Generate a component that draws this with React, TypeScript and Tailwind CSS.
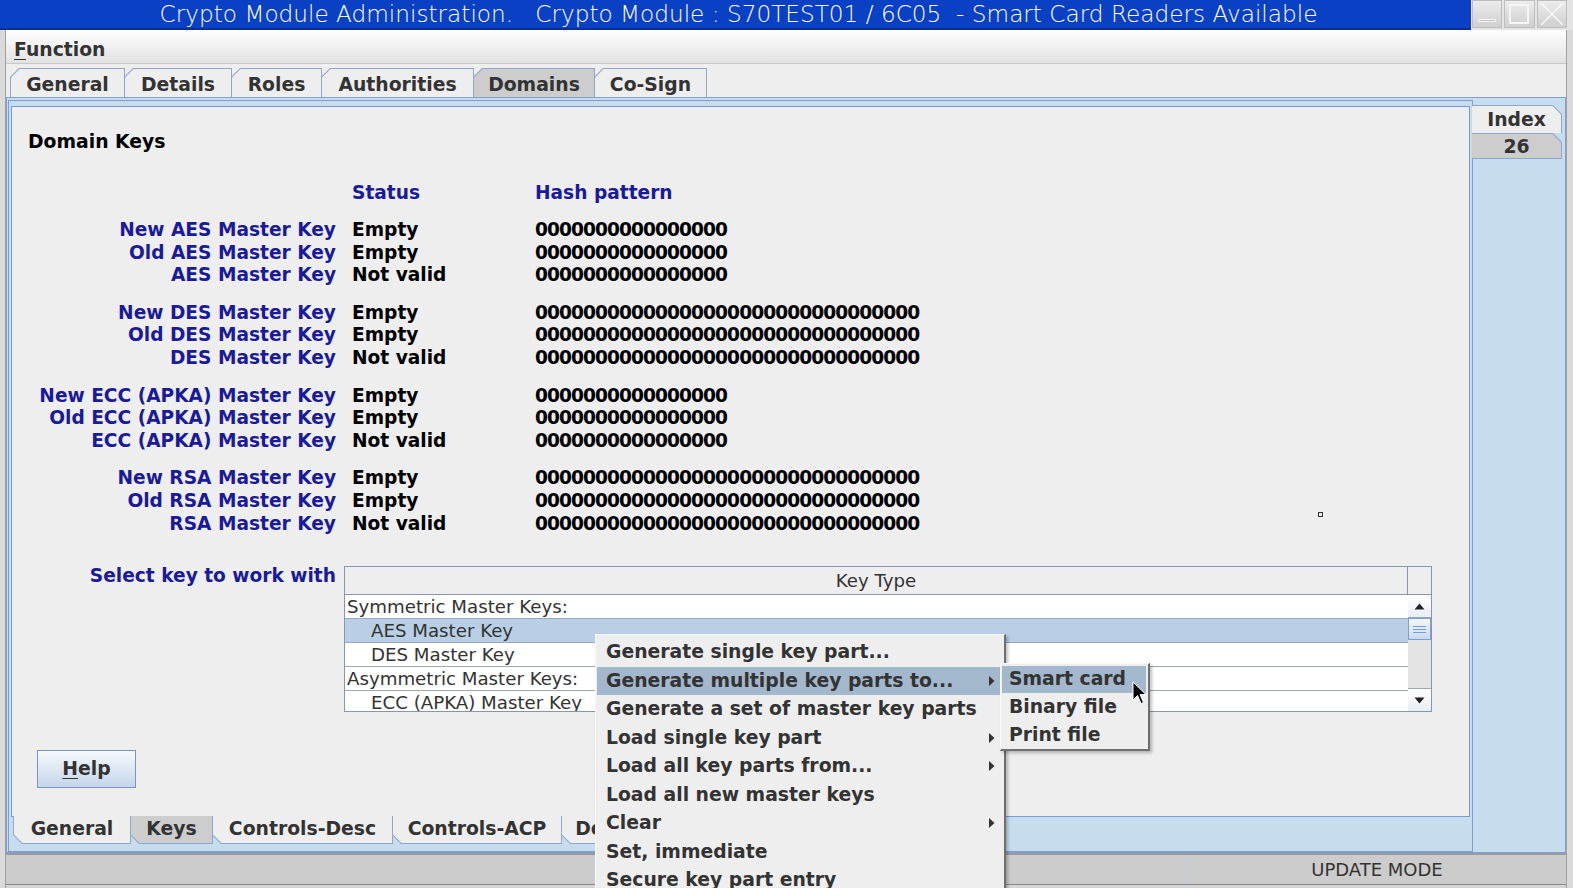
import React from 'react'

const zeros16 = '0'.repeat(16)
const zeros32 = '0'.repeat(32)

const groups = [
  [
    ['New AES Master Key', 'Empty', zeros16],
    ['Old AES Master Key', 'Empty', zeros16],
    ['AES Master Key', 'Not valid', zeros16],
  ],
  [
    ['New DES Master Key', 'Empty', zeros32],
    ['Old DES Master Key', 'Empty', zeros32],
    ['DES Master Key', 'Not valid', zeros32],
  ],
  [
    ['New ECC (APKA) Master Key', 'Empty', zeros16],
    ['Old ECC (APKA) Master Key', 'Empty', zeros16],
    ['ECC (APKA) Master Key', 'Not valid', zeros16],
  ],
  [
    ['New RSA Master Key', 'Empty', zeros32],
    ['Old RSA Master Key', 'Empty', zeros32],
    ['RSA Master Key', 'Not valid', zeros32],
  ],
]

const topTabs = [
  { label: 'General', w: 'w-[115px]' },
  { label: 'Details', w: 'w-[108px]' },
  { label: 'Roles', w: 'w-[91px]' },
  { label: 'Authorities', w: 'w-[153px]' },
  { label: 'Domains', w: 'w-[122px]', selected: true },
  { label: 'Co-Sign', w: 'w-[113px]' },
]

const bottomTabs = [
  { label: 'General', w: 'w-[118px]' },
  { label: 'Keys', w: 'w-[83px]', selected: true },
  { label: 'Controls-Desc', w: 'w-[181px]' },
  { label: 'Controls-ACP', w: 'w-[170px]' },
  { label: 'Domains', w: 'w-[120px]' },
]

const menuItems = [
  { label: 'Generate single key part...' },
  { label: 'Generate multiple key parts to...', sub: true, active: true },
  { label: 'Generate a set of master key parts' },
  { label: 'Load single key part', sub: true },
  { label: 'Load all key parts from...', sub: true },
  { label: 'Load all new master keys' },
  { label: 'Clear', sub: true },
  { label: 'Set, immediate' },
  { label: 'Secure key part entry' },
]

function Arrow() {
  return (
    <svg width="7" height="12" viewBox="0 0 7 12">
      <path d="M1 1 L6.5 6 L1 11 Z" fill="#333" />
    </svg>
  )
}

export default function App() {
  return (
    <div className="w-[1573px] h-[888px] overflow-hidden bg-[#eeeeee] relative flex flex-col font-['DejaVu_Sans',sans-serif] text-[#333]">
      {/* title bar */}
      <div className="h-[30px] flex shrink-0">
        <div className="flex-1 bg-[#0a40c4] border-b-2 border-[#0a2f8c] flex items-center justify-center pl-[6px] text-white text-[23.2px] font-extralight whitespace-pre">
          Crypto Module Administration.   Crypto Module : S70TEST01 / 6C05  - Smart Card Readers Available
        </div>
        <div className="w-[102px] bg-[#e4e4e4] flex gap-[2px] pl-[1px] pr-[6px] pb-[2px]">
          <div className="flex-1 bg-gradient-to-b from-[#ececec] to-[#cfcfcf] border border-[#bdbdbd] flex items-end justify-center pb-[5px]">
            <div className="w-[18px] h-[3px] border border-[#f6f6f6] bg-[#c4c4c4]" />
          </div>
          <div className="flex-1 bg-gradient-to-b from-[#ececec] to-[#cfcfcf] border border-[#bdbdbd] flex items-center justify-center">
            <div className="w-[20px] h-[20px] border-2 border-[#f6f6f6]" />
          </div>
          <div className="flex-1 bg-gradient-to-b from-[#ececec] to-[#cfcfcf] border border-[#bdbdbd] flex items-center justify-center">
            <svg width="26" height="26" viewBox="0 0 26 26">
              <path d="M2 2 L24 24 M24 2 L2 24" stroke="#f8f8f8" strokeWidth="1.5" />
            </svg>
          </div>
        </div>
      </div>

      <div className="flex-1 flex min-h-0">
        {/* left window frame */}
        <div className="w-[6px] bg-[#dadada] border-r border-[#a0a0a0]" />

        <div className="flex-1 flex flex-col min-w-0">
          {/* menu bar */}
          <div className="h-[34px] shrink-0 bg-gradient-to-b from-white to-[#e2e2e2] border-b border-[#c8c8c8] flex items-center pl-[8px] pt-[7px] text-[18.8px] font-bold">
            <span>
              <span className="underline underline-offset-[3px]">F</span>unction
            </span>
          </div>

          {/* top tabs */}
          <div className="h-[33px] shrink-0 flex items-end pl-[4px]">
            {topTabs.map((t) => (
              <div
                key={t.label}
                className={`${t.w} h-[29px] -mr-[1px] p-[1px] pb-0 bg-[#8fa7cb] [clip-path:polygon(9px_0,100%_0,100%_100%,0_100%,0_9px)]`}
              >
                <div
                  className={`h-full flex items-center justify-center pt-[4px] text-[18.8px] font-bold [clip-path:polygon(8.5px_0,100%_0,100%_100%,0_100%,0_8.5px)] ${t.selected ? 'bg-[#cdcdcd]' : 'bg-[#eeeeee]'}`}
                >
                  {t.label}
                </div>
              </div>
            ))}
          </div>

          {/* outer tab content */}
          <div className="h-[756px] shrink-0 border border-[#7f9fd2] bg-[#c8dcf0] pt-[2px] pl-[1px] flex">
            {/* pane with right tabs */}
            <div className="w-[1465px] h-[752px] border border-[#7f9fd2] bg-[#c8dcf0] pt-[5px] pl-[2px] pr-[2px] flex flex-col">
              {/* inner content box */}
              <div className="h-[711px] shrink-0 border border-[#7a9ad4] bg-[#eeeeee] relative flex flex-col">
                <div className="pl-[16px] pt-[24px] text-[18.8px] font-bold text-black leading-[22px]">Domain Keys</div>

                <div className="mt-[29px] flex flex-col text-[18.6px] font-bold">
                  <div className="flex leading-[22px] text-[#1a1a9a]">
                    <div className="w-[324px]" />
                    <div className="ml-[16px] w-[183px]">Status</div>
                    <div>Hash pattern</div>
                  </div>
                  {groups.map((g, gi) => (
                    <div key={gi} className="mt-[15px] flex flex-col">
                      {g.map(([label, status, hash]) => (
                        <div key={label} className="flex leading-[22.6px]">
                          <div className="w-[324px] text-right text-[#1a1a9a]">{label}</div>
                          <div className="ml-[16px] w-[183px] text-black">{status}</div>
                          <div className="text-black tracking-[-0.93px]">{hash}</div>
                        </div>
                      ))}
                    </div>
                  ))}
                </div>

                {/* select key + table */}
                <div className="mt-[31px] flex items-start">
                  <div className="w-[324px] text-right text-[18.6px] font-bold text-[#1a1a9a] leading-[22px] -mt-[1px]">
                    Select key to work with
                  </div>
                  <div className="ml-[8px] w-[1088px] h-[146px] border border-[#8796a8] flex overflow-hidden text-[18.2px] text-[#333]">
                    <div className="flex-1 flex flex-col">
                      <div className="h-[28px] shrink-0 border-b border-r border-[#8796a8] flex items-center justify-center">Key Type</div>
                      <div className="h-[24px] shrink-0 bg-white border-b border-[#9aa8b8] flex items-center pl-[2px]">Symmetric Master Keys:</div>
                      <div className="h-[24px] shrink-0 bg-[#b8cfe5] border-b border-[#9aa8b8] flex items-center pl-[26px]">AES Master Key</div>
                      <div className="h-[24px] shrink-0 bg-white border-b border-[#9aa8b8] flex items-center pl-[26px]">DES Master Key</div>
                      <div className="h-[24px] shrink-0 bg-white border-b border-[#9aa8b8] flex items-center pl-[2px]">Asymmetric Master Keys:</div>
                      <div className="h-[24px] shrink-0 bg-white flex items-center pl-[26px]">ECC (APKA) Master Key</div>
                    </div>
                    {/* scrollbar */}
                    <div className="w-[23px] flex flex-col">
                      <div className="h-[28px] shrink-0 border-b border-[#8796a8]" />
                      <div className="h-[23px] shrink-0 bg-gradient-to-b from-white to-[#e8eef5] border-b border-[#9aa8b8] flex items-center justify-center">
                        <svg width="11" height="7" viewBox="0 0 11 7">
                          <path d="M0.5 6.5 L5.5 0.5 L10.5 6.5 Z" fill="#222" />
                        </svg>
                      </div>
                      <div className="h-[22px] shrink-0 bg-gradient-to-b from-[#f2f7fc] to-[#c8daee] border border-[#7f9fd2] flex flex-col items-center justify-center gap-[2px]">
                        <div className="w-[13px] h-[1px] bg-[#7a9ad4]" />
                        <div className="w-[13px] h-[1px] bg-[#7a9ad4]" />
                        <div className="w-[13px] h-[1px] bg-[#7a9ad4]" />
                      </div>
                      <div className="flex-1 bg-[#e4e4e4]" />
                      <div className="h-[23px] shrink-0 bg-gradient-to-b from-white to-[#e8eef5] border-t border-[#9aa8b8] flex items-center justify-center">
                        <svg width="11" height="7" viewBox="0 0 11 7">
                          <path d="M0.5 0.5 L5.5 6.5 L10.5 0.5 Z" fill="#222" />
                        </svg>
                      </div>
                    </div>
                  </div>
                </div>

                <div className="mt-[38px] ml-[25px]">
                  <button className="w-[99px] h-[38px] border border-[#7b95bf] bg-gradient-to-b from-[#f6f9fc] to-[#c4d6ea] text-[18.8px] font-bold text-[#333]">
                    <span className="underline underline-offset-[3px]">H</span>elp
                  </button>
                </div>

                <div className="absolute left-[1306px] top-[405px] w-[5px] h-[5px] border border-[#333]" />
              </div>

              {/* bottom tabs */}
              <div className="h-[28px] -mt-[1px] pl-[2px] flex items-start">
                {bottomTabs.map((t) => (
                  <div
                    key={t.label}
                    className={`${t.w} h-[28px] -mr-[1px] p-[1px] pt-0 bg-[#8fa7cb] [clip-path:polygon(0_0,100%_0,100%_100%,9px_100%,0_calc(100%-9px))]`}
                  >
                    <div
                      className={`h-full flex items-center justify-center text-[18.8px] font-bold [clip-path:polygon(0_0,100%_0,100%_100%,8.5px_100%,0_calc(100%-8.5px))] ${t.selected ? 'bg-[#cdcdcd]' : 'bg-[#eeeeee]'}`}
                    >
                      {t.label}
                    </div>
                  </div>
                ))}
              </div>
            </div>

            {/* right tabs */}
            <div className="flex-1 pt-[5px] -ml-[1px] flex flex-col">
              <div className="w-[90px] h-[28px] p-[1px] pl-0 pb-0 bg-[#8fa7cb] [clip-path:polygon(0_0,calc(100%-9px)_0,100%_9px,100%_100%,0_100%)]">
                <div className="h-full bg-[#eeeeee] flex items-center justify-center pt-[2px] text-[18.8px] font-bold [clip-path:polygon(0_0,calc(100%-8.5px)_0,100%_8.5px,100%_100%,0_100%)]">
                  Index
                </div>
              </div>
              <div className="w-[90px] h-[26px] p-[1px] pl-0 bg-[#8fa7cb] [clip-path:polygon(0_0,calc(100%-9px)_0,100%_9px,100%_100%,0_100%)]">
                <div className="h-full bg-[#cdcdcd] flex items-center justify-center pt-[2px] text-[18.8px] font-bold [clip-path:polygon(0_0,calc(100%-8.5px)_0,100%_8.5px,100%_100%,0_100%)]">
                  26
                </div>
              </div>
            </div>
          </div>

          {/* status bar */}
          <div className="h-[31px] shrink-0 bg-[#cccccc] border-t-2 border-[#9a9a9a] flex">
            <div className="w-[1182px] border-r border-[#b8cfe5]" />
            <div className="flex-1 flex items-center justify-center text-[18px] text-[#333]">UPDATE MODE</div>
          </div>
          <div className="h-[4px] shrink-0 bg-[#d4d4d4] border-t border-[#888]" />
        </div>

        {/* right window frame */}
        <div className="w-[7px] bg-[#dadada] border-l border-[#a0a0a0]" />
      </div>

      {/* popup menu */}
      <div className="absolute left-[595px] top-[634px] w-[411px] h-[270px] bg-[#eeeeee] border-t border-l border-[#fafafa] border-r-2 border-r-[#6f6f6f] shadow-[2px_2px_3px_rgba(0,0,0,0.25)] pt-[3px] pl-[1px] pr-[3px] flex flex-col text-[18.8px] font-bold text-[#333]">
        {menuItems.map((m) => (
          <div
            key={m.label}
            className={`h-[28.5px] shrink-0 flex items-center justify-between pl-[9px] pr-[6px] ${m.active ? 'bg-[#a3b8cc]' : ''}`}
          >
            <span>{m.label}</span>
            {m.sub && <Arrow />}
          </div>
        ))}
      </div>

      {/* submenu */}
      <div className="absolute left-[1000px] top-[663px] w-[150px] h-[88px] bg-[#eeeeee] border-t border-l border-[#fafafa] border-r-2 border-b-2 border-r-[#6f6f6f] border-b-[#6f6f6f] shadow-[2px_2px_3px_rgba(0,0,0,0.25)] pt-[2px] pl-[1px] pr-[2px] flex flex-col text-[18.8px] font-bold text-[#333]">
        <div className="h-[27px] shrink-0 bg-[#a3b8cc] flex items-center pl-[7px]">Smart card</div>
        <div className="h-[28px] shrink-0 flex items-center pl-[7px]">Binary file</div>
        <div className="h-[28px] shrink-0 flex items-center pl-[7px]">Print file</div>
      </div>

      {/* mouse cursor */}
      <svg className="absolute left-[1132px] top-[681px]" width="16" height="26" viewBox="0 0 16 26">
        <path d="M1 1 L1 19 L5.5 14.5 L9 22.5 L11.5 21.5 L8 13.5 L14 13.5 Z" fill="#000" stroke="#fff" strokeWidth="1" />
      </svg>
    </div>
  )
}
